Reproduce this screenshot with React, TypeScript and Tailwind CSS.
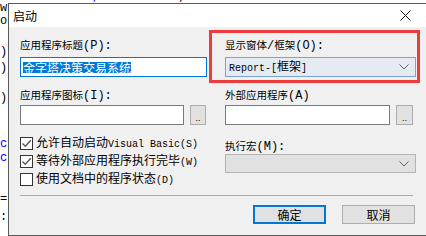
import React from "react";

const cjkRe = /([\u3000-\u9fff\uff00-\uffef]+)/;

function Mixed({ text, cjk, latin }: { text: string; cjk: string; latin: string }) {
    return (
        <>
            {text
                .split(cjkRe)
                .filter(Boolean)
                .map((part, i) => (
                    <span key={i} className={cjkRe.test(part) ? cjk : latin}>
                        {part}
                    </span>
                ))}
        </>
    );
}

const labelCjk = "font-['Noto_Sans_CJK_SC',sans-serif] text-[10.5px]";
const labelLatin = "font-['Liberation_Mono',monospace] text-[12px]";
const songCjk = "font-['Noto_Sans_CJK_SC',sans-serif] text-[12px]";
const songLatin = "font-['Liberation_Mono',monospace] text-[10px]";

function Label({ text }: { text: string }) {
    return (
        <div className="h-[14px] leading-[14px] text-black whitespace-nowrap">
            <Mixed text={text} cjk={labelCjk} latin={labelLatin} />
        </div>
    );
}

function Chevron() {
    return (
        <svg width="10" height="6" viewBox="0 0 10 6" className="shrink-0">
            <path d="M0.5 0.5 L5 5 L9.5 0.5" fill="none" stroke="#606060" strokeWidth="1" />
        </svg>
    );
}

function DotsButton({ w }: { w: string }) {
    return (
        <div className={`${w} h-[20px] shrink-0 border border-[#adadad] bg-[#e1e1e1] flex items-end justify-center pb-[3px]`}>
            <span className="font-['Liberation_Sans',sans-serif] text-[9px] leading-[6px] text-black">..</span>
        </div>
    );
}

function Check({ checked, text }: { checked: boolean; text: string }) {
    return (
        <div className="h-[18px] flex items-center gap-[3px]">
            <div className="w-[13px] h-[13px] shrink-0 border border-[#333333] bg-white flex items-center justify-center">
                {checked && (
                    <svg width="11" height="11" viewBox="0 0 11 11">
                        <path d="M1.5 5.5 L4.3 8.3 L9.8 2.3" fill="none" stroke="#555555" strokeWidth="1.3" />
                    </svg>
                )}
            </div>
            <div className="leading-[14px] text-black whitespace-nowrap">
                <Mixed text={text} cjk={songCjk} latin={songLatin} />
            </div>
        </div>
    );
}

export default function App() {
    return (
        <div className="relative w-[426px] h-[236px] overflow-hidden bg-white">
            {/* code editor behind the dialog */}
            <div className="absolute left-0 top-0 font-['Liberation_Mono',monospace] text-[12px] text-black">
                <div className="absolute left-[92px] top-[-12px] whitespace-nowrap">
                    <span className="text-[#0000ff]">,</span> Hide    11  1  ,  +400
                </div>
                <div className="absolute left-0 top-[-1px]">w</div>
                <div className="absolute left-0 top-[12px]">o</div>
                <div className="absolute left-0 top-[43px]">)</div>
                <div className="absolute left-0 top-[59px]">)</div>
                <div className="absolute left-0 top-[89px]">)</div>
                <div className="absolute left-0 top-[135px] text-[#0000ff]">c</div>
                <div className="absolute left-0 top-[149px] text-[#0000ff]">c</div>
                <div className="absolute left-0 top-[190px]">=</div>
                <div className="absolute left-0 top-[208px]">:</div>
            </div>

            {/* dialog */}
            <div className="absolute left-[8px] top-[3px] w-[420px] h-[233px] flex flex-col border border-[#5a5a5a] bg-[#f0f0f0]">
                <div className="h-[23px] shrink-0 bg-white flex items-center">
                    <span className="pl-[4px] font-['Noto_Sans_CJK_SC',sans-serif] text-[12px] leading-[14px] text-black">启动</span>
                    <div className="ml-auto w-[44px] flex justify-center">
                        <svg width="11" height="11" viewBox="0 0 11 11">
                            <path d="M0.5 0.5 L10.5 10.5 M10.5 0.5 L0.5 10.5" stroke="#111111" strokeWidth="1" />
                        </svg>
                    </div>
                </div>

                <div className="flex-1 pl-[11px] pt-[9px]">
                    <div className="grid grid-cols-[187px_191px] gap-x-[18px] items-start">
                        {/* left column */}
                        <div className="flex flex-col">
                            <Label text="应用程序标题(P):" />
                            <div className="mt-[7px] h-[20px] border border-[#0078d7] bg-white flex items-center pl-[2px]">
                                <span className={`${songCjk} leading-[11px] h-[11px] bg-[#0078d7] text-white whitespace-nowrap`}>
                                    金字塔决策交易系统
                                </span>
                            </div>
                            <div className="mt-[9px]">
                                <Label text="应用程序图标(I):" />
                            </div>
                            <div className="mt-[5px] flex gap-[6px]">
                                <div className="w-[164px] h-[20px] border border-[#7a7a7a] bg-white" />
                                <DotsButton w="w-[16px]" />
                            </div>
                            <div className="mt-[9px] flex flex-col">
                                <Check checked text="允许自动启动Visual Basic(S)" />
                                <Check checked text="等待外部应用程序执行完毕(W)" />
                                <Check checked={false} text="使用文档中的程序状态(D)" />
                            </div>
                        </div>

                        {/* right column */}
                        <div className="flex flex-col">
                            <Label text="显示窗体/框架(O):" />
                            <div className="mt-[7px] h-[20px] border border-[#7aa5d2] bg-[#e5ebf2] flex items-center pl-[3px] pr-[6px]">
                                <span className="leading-[14px] text-black whitespace-nowrap">
                                    <Mixed text="Report-[框架]" cjk={songCjk} latin={songLatin} />
                                </span>
                                <div className="ml-auto">
                                    <Chevron />
                                </div>
                            </div>
                            <div className="mt-[9px]">
                                <Label text="外部应用程序(A)" />
                            </div>
                            <div className="mt-[5px] flex gap-[6px]">
                                <div className="w-[165px] h-[20px] border border-[#7a7a7a] bg-white" />
                                <DotsButton w="w-[17px]" />
                            </div>
                            <div className="mt-[12px]">
                                <Label text="执行宏(M):" />
                            </div>
                            <div className="mt-[3px] h-[19px] border border-[#b4b4b4] bg-[#e1e1e1] flex items-center justify-end pr-[6px]">
                                <Chevron />
                            </div>
                        </div>
                    </div>

                    <div className="mt-[7px] w-[393px] h-px bg-[#a8a8a8]" />

                    <div className="mt-[9px] w-[395px] flex justify-end gap-[16px]">
                        <div className="w-[73px] h-[19px] border-2 border-[#0078d7] bg-[#e1e1e1] flex items-center justify-center">
                            <span className="font-['Noto_Sans_CJK_SC',sans-serif] text-[12px] leading-[14px] text-black">确定</span>
                        </div>
                        <div className="w-[73px] h-[19px] border border-[#adadad] bg-[#e1e1e1] flex items-center justify-center">
                            <span className="font-['Noto_Sans_CJK_SC',sans-serif] text-[12px] leading-[14px] text-black">取消</span>
                        </div>
                    </div>
                </div>
            </div>

            {/* red annotation box */}
            <div className="absolute left-[209px] top-[30px] w-[211px] h-[53px] border-[3px] border-[#ef3b3b]" />
        </div>
    );
}
